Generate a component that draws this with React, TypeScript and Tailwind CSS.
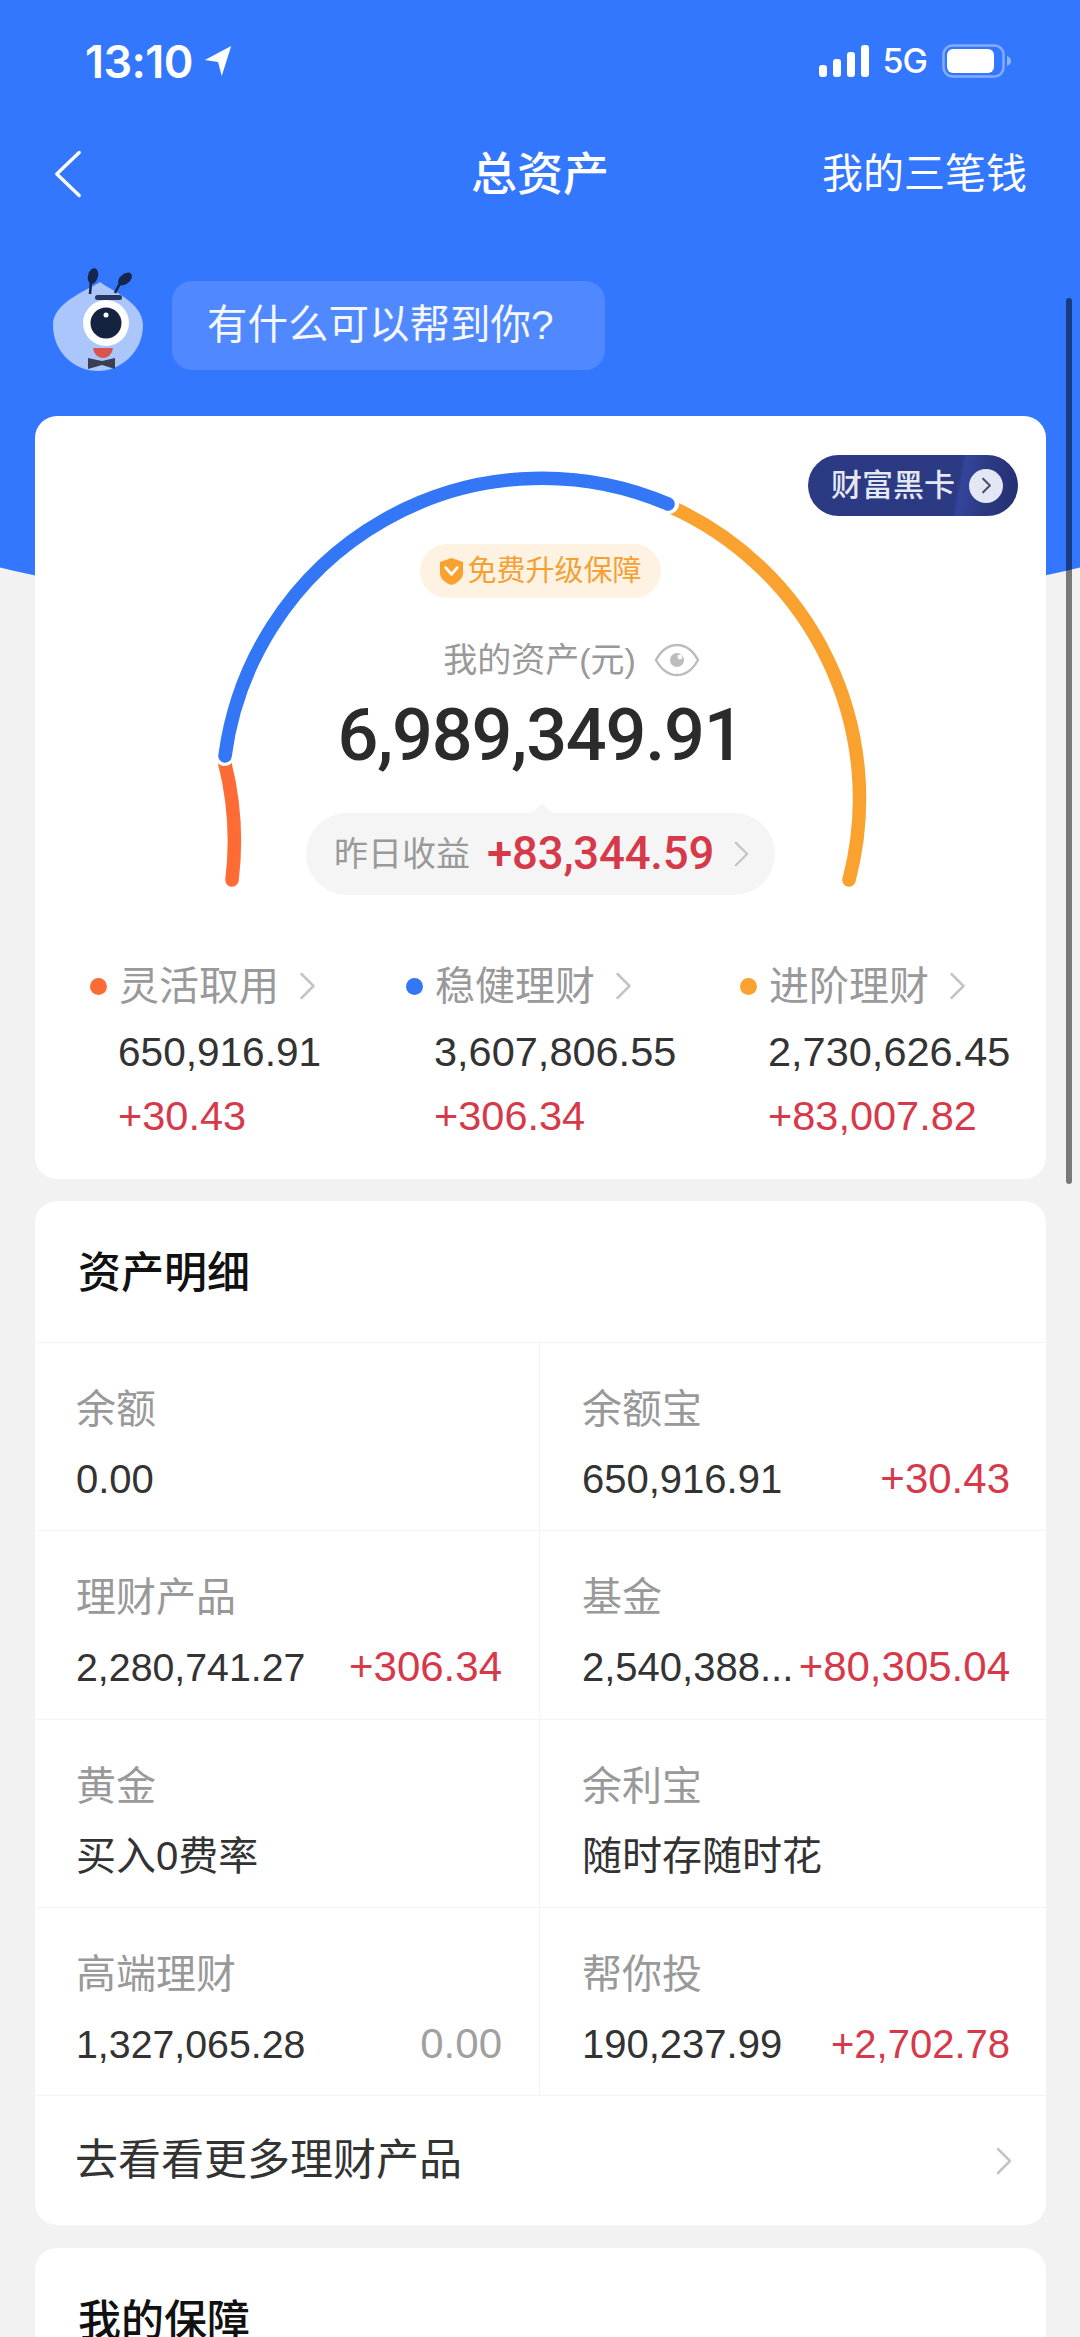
import React from "react";

const CJK = "font-['Liberation_Sans','Noto_Sans_CJK_SC',sans-serif]";

function Chevron({ className, stroke = "#c4c4c4", sw = 2.5 }: { className?: string; stroke?: string; sw?: number }) {
  return (
    <svg viewBox="0 0 16 28" className={className} fill="none">
      <path d="M2 2 L14 14 L2 26" stroke={stroke} strokeWidth={sw} strokeLinecap="round" strokeLinejoin="round" />
    </svg>
  );
}

function StatusBar() {
  return (
    <div className="h-[122px] flex items-start justify-between pt-[42px] pl-[85px] pr-[68px] text-white">
      <div className="flex items-center gap-[10px] h-[38px]">
        <span className="font-['Inter',sans-serif] font-semibold text-[45px] leading-none tracking-[-0.6px]">13:10</span>
        <svg viewBox="0 0 30 34" className="w-[30px] h-[32px]" fill="#fff">
          <path d="M29 1 L19 33 L15 18 L1 16 Z" />
        </svg>
      </div>
      <div className="flex items-center h-[38px]">
        <svg viewBox="0 0 50 32" className="w-[50px] h-[32px] mr-[14px]" fill="#fff">
          <rect x="0" y="20" width="8" height="12" rx="3" />
          <rect x="14" y="14" width="8" height="18" rx="3" />
          <rect x="28" y="7" width="8" height="25" rx="3" />
          <rect x="42" y="0" width="8" height="32" rx="3" />
        </svg>
        <span className="font-['Inter',sans-serif] font-medium text-[34px] leading-none tracking-[-1px] mr-[15px]">5G</span>
        <svg viewBox="0 0 70 34" className="w-[70px] h-[34px]" fill="none">
          <rect x="1.5" y="1.5" width="60" height="31" rx="9" stroke="#ffffff" strokeOpacity="0.4" strokeWidth="2.5" />
          <rect x="5" y="5" width="47" height="24" rx="6" fill="#fff" />
          <path d="M65 12 C68 13 69 15 69 17 C69 19 68 21 65 22 Z" fill="#ffffff" fillOpacity="0.45" />
        </svg>
      </div>
    </div>
  );
}

function NavBar() {
  return (
    <div className="relative h-[104px] flex items-center justify-between pl-[54px] pr-[53px] text-white">
      <svg viewBox="0 0 30 50" className="w-[28px] h-[50px]" fill="none">
        <path d="M27 2 L3 25 L27 48" stroke="#fff" strokeWidth="3.6" strokeLinecap="round" strokeLinejoin="round" />
      </svg>
      <span className={`absolute left-0 right-0 top-[29px] text-center text-[46px] leading-none font-medium ${CJK}`}>总资产</span>
      <span className={`text-[41px] leading-none ${CJK}`}>我的三笔钱</span>
    </div>
  );
}

function Mascot() {
  return (
    <svg viewBox="0 0 96 106" className="w-[96px] h-[106px] mt-[42px] shrink-0">
      <path d="M50 14 C60 22 93 34 93 57 C93 85 70 103 48 103 C25 103 3 85 3 57 C3 34 38 22 50 14 Z" fill="#abc6fb" />
      <path d="M40 26 L41 14" stroke="#16264f" strokeWidth="2.6" fill="none" />
      <ellipse cx="43" cy="8" rx="5" ry="8" fill="#16264f" transform="rotate(15 43 8)" />
      <path d="M65 25 C67 21 69 17 71 14" stroke="#16264f" strokeWidth="2.6" fill="none" />
      <ellipse cx="75" cy="11" rx="5" ry="8" fill="#16264f" transform="rotate(50 75 11)" />
      <rect x="45" y="27" width="27" height="5" rx="2.5" fill="#26365f" />
      <circle cx="56" cy="55" r="23" fill="#fff" />
      <circle cx="56" cy="55" r="15.5" fill="#15233f" />
      <circle cx="56" cy="47" r="2.5" fill="#fff" />
      <path d="M43 80 L63 80 C62 87 57 90 53 90 C49 90 44 87 43 80 Z" fill="#d9534f" />
      <path d="M38 90 L52 93 L65 90 L65 101 L52 97 L38 101 Z" fill="#3a4050" />
    </svg>
  );
}

function Gauge() {
  const base = { fill: "none", strokeWidth: 13.5, strokeLinecap: "round" as const };
  return (
    <svg viewBox="0 0 1011 560" className="absolute left-0 top-0 w-[1011px] h-[560px]">
      <path d="M197 464 A320 320 0 0 0 189.5 346" stroke="#ff6b35" {...base} />
      <path d="M634 90 A320 320 0 0 1 814 464" stroke="#f9a230" {...base} />
      <path d="M189.5 340 A320 320 0 0 1 634 88" stroke="#fff" fill="none" strokeWidth="20" strokeLinecap="round" />
      <path d="M190 340 A320 320 0 0 1 633 88" stroke="#3377f6" {...base} />
    </svg>
  );
}

function Summary() {
  const cols = [
    { dot: "bg-[#ff6b35]", label: "灵活取用", value: "650,916.91", delta: "+30.43", size: "text-[40.6px]" },
    { dot: "bg-[#3377f6]", label: "稳健理财", value: "3,607,806.55", delta: "+306.34", size: "text-[41.5px]" },
    { dot: "bg-[#f9a230]", label: "进阶理财", value: "2,730,626.45", delta: "+83,007.82", size: "text-[41.5px]" },
  ];
  return (
    <div className="grid grid-cols-[316px_334px_1fr] pl-[55px]">
      {cols.map((c) => (
        <div key={c.label} className="flex flex-col">
          <div className="flex items-center h-[64px]">
            <span className={`w-[17px] h-[17px] rounded-full mr-[12px] ${c.dot}`} />
            <span className={`text-[40px] leading-none text-[#999999] ${CJK}`}>{c.label}</span>
            <Chevron className="w-[17px] h-[28px] ml-[20px]" />
          </div>
          <div className={`pl-[28px] mt-[2px] h-[64px] flex items-center ${c.size} leading-none text-[#333333] ${CJK}`}>{c.value}</div>
          <div className={`pl-[28px] h-[64px] flex items-center text-[41.5px] leading-none text-[#d6394a] ${CJK}`}>{c.delta}</div>
        </div>
      ))}
    </div>
  );
}

type CellProps = { label: string; value: string; delta?: string; muted?: boolean; border?: boolean; narrow?: boolean; deltaSm?: boolean };

function AssetCell({ label, value, delta, muted, border, narrow, deltaSm }: CellProps) {
  return (
    <div className={`h-[187px] min-w-0 flex flex-col pt-[44px] ${border ? "border-r border-[#f4f4f4] pl-[41px] pr-[37px]" : "pl-[42px] pr-[36px]"}`}>
      <div className={`text-[40px] leading-[44px] text-[#999999] ${CJK}`}>{label}</div>
      <div className="flex items-center justify-between mt-[26px] h-[44px]">
        <span className={`${narrow ? "text-[39.3px]" : "text-[40px]"} leading-[44px] text-[#333333] whitespace-nowrap ${CJK}`}>{value}</span>
        {delta && <span className={`${deltaSm ? "text-[40px]" : "text-[42px]"} leading-[44px] shrink-0 ${muted ? "text-[#a0a0a0]" : "text-[#d6394a]"} ${CJK}`}>{delta}</span>}
      </div>
    </div>
  );
}

export default function App() {
  const rows: [CellProps, CellProps][] = [
    [{ label: "余额", value: "0.00" }, { label: "余额宝", value: "650,916.91", delta: "+30.43" }],
    [{ label: "理财产品", value: "2,280,741.27", delta: "+306.34", narrow: true }, { label: "基金", value: "2,540,388...", delta: "+80,305.04" }],
    [{ label: "黄金", value: "买入0费率" }, { label: "余利宝", value: "随时存随时花" }],
    [{ label: "高端理财", value: "1,327,065.28", delta: "0.00", muted: true, narrow: true }, { label: "帮你投", value: "190,237.99", delta: "+2,702.78", deltaSm: true }],
  ];
  return (
    <div className={`relative w-[1080px] h-[2337px] overflow-hidden bg-[#f2f2f2] ${CJK}`}>
      <div className="absolute left-[-270px] top-0 w-[1620px] h-[624px] bg-[#3377ff] rounded-b-[810px_222px]" />
      <div className="relative">
        <StatusBar />
        <NavBar />
        <div className="flex items-start pl-[50px] h-[145px] gap-[26px]">
          <Mascot />
          <div className={`mt-[55px] w-[433px] h-[89px] rounded-[20px] bg-[#5088ff] flex items-center pl-[35px] text-[#f4f7ff] text-[40.5px] leading-none ${CJK}`}>有什么可以帮到你?</div>
        </div>
        <div className="h-[45px]" />

        <div className="mx-[35px] w-[1011px] h-[763px] bg-white rounded-[22px] relative">
          <Gauge />
          <div className="absolute right-[28px] top-[39px] w-[210px] h-[61px] rounded-full bg-[linear-gradient(100deg,#2b3a82_0%,#2b3a82_70%,#34459c_72%,#2d3b85_82%,#232f6e_100%)] flex items-center overflow-hidden">
            <span className={`pl-[23px] text-[31px] leading-none font-medium text-[#e4e8f5] ${CJK}`}>财富黑卡</span>
            <span className="ml-[14px] w-[34px] h-[34px] rounded-full bg-[#e3e6f3] flex items-center justify-center">
              <svg viewBox="0 0 12 20" className="w-[11px] h-[17px]" fill="none"><path d="M2 2 L10 10 L2 18" stroke="#4a5070" strokeWidth="2.4" strokeLinecap="round" strokeLinejoin="round" /></svg>
            </span>
          </div>
          <div className="relative flex flex-col items-center h-[538px] pt-[128px]">
            <div className="w-[241px] h-[54px] rounded-full bg-[#fef3e3] flex items-center justify-center gap-[3px]">
              <svg viewBox="0 0 26 30" className="w-[25px] h-[29px]">
                <path d="M13 1 L25 5 L25 16 C25 23 19 27 13 29 C7 27 1 23 1 16 L1 5 Z" fill="#f9a230" />
                <path d="M7 11 L13 18 L19 11" stroke="#fff" strokeWidth="3" fill="none" strokeLinecap="round" strokeLinejoin="round" />
              </svg>
              <span className={`text-[29px] leading-none text-[#f5a033] ${CJK}`}>免费升级保障</span>
            </div>
            <div className="flex items-center mt-[37px] h-[50px] pl-[62px]">
              <span className={`text-[34px] leading-none text-[#999999] ${CJK}`}>我的资产(元)</span>
              <svg viewBox="0 0 46 34" className="w-[46px] h-[34px] ml-[18px]" fill="none">
                <path d="M2 17 C8 6 15 2 23 2 C31 2 38 6 44 17 C38 28 31 32 23 32 C15 32 8 28 2 17 Z" stroke="#bdbdbd" strokeWidth="2.5" />
                <circle cx="23" cy="17" r="7" fill="#bdbdbd" />
                <circle cx="26" cy="14" r="2.4" fill="#fff" />
              </svg>
            </div>
            <div className="mt-[11px] font-['Roboto',sans-serif] font-medium text-[72px] leading-[80px] text-[#2b2b2b] tracking-[-1.2px]">6,989,349.91</div>
            <div className="relative mt-[37px] w-[469px] h-[82px] rounded-full bg-[#f5f5f5] flex items-center pl-[28px]">
              <span className="absolute left-[224px] top-[-9px] w-0 h-0 border-x-[12px] border-x-transparent border-b-[10px] border-b-[#f5f5f5]" />
              <span className={`text-[34px] leading-none text-[#999999] ${CJK}`}>昨日收益</span>
              <span className="ml-[17px] font-['Roboto',sans-serif] font-medium text-[45.5px] leading-none text-[#d6394a] tracking-[-0.2px]">+83,344.59</span>
              <Chevron className="w-[15px] h-[28px] ml-[20px]" />
            </div>
          </div>
          <Summary />
        </div>

        <div className="mx-[35px] w-[1011px] mt-[22px] h-[1024px] bg-white rounded-[22px] overflow-hidden">
          <div className={`h-[142px] pt-[4px] flex items-center pl-[43px] text-[43px] leading-none font-medium text-[#111111] border-b border-[#f4f4f4] ${CJK}`}>资产明细</div>
          {rows.map((r, i) => (
            <div key={i} className="grid grid-cols-[505px_minmax(0,1fr)] border-b border-[#f4f4f4] h-[188.25px]">
              <AssetCell {...r[0]} border />
              <AssetCell {...r[1]} />
            </div>
          ))}
          <div className="h-[129px] flex items-center justify-between pl-[40px] pr-[34px]">
            <span className={`text-[43px] leading-none text-[#333333] ${CJK}`}>去看看更多理财产品</span>
            <Chevron className="w-[16px] h-[28px]" />
          </div>
        </div>

        <div className="mx-[35px] w-[1011px] mt-[23px] h-[200px] bg-white rounded-[22px]">
          <div className={`h-[142px] pt-[4px] flex items-center pl-[43px] text-[43px] leading-none font-medium text-[#111111] ${CJK}`}>我的保障</div>
        </div>
      </div>
      <div className="absolute right-[8px] top-[298px] w-[6px] h-[886px] rounded-full bg-[#00000080]" />
    </div>
  );
}
